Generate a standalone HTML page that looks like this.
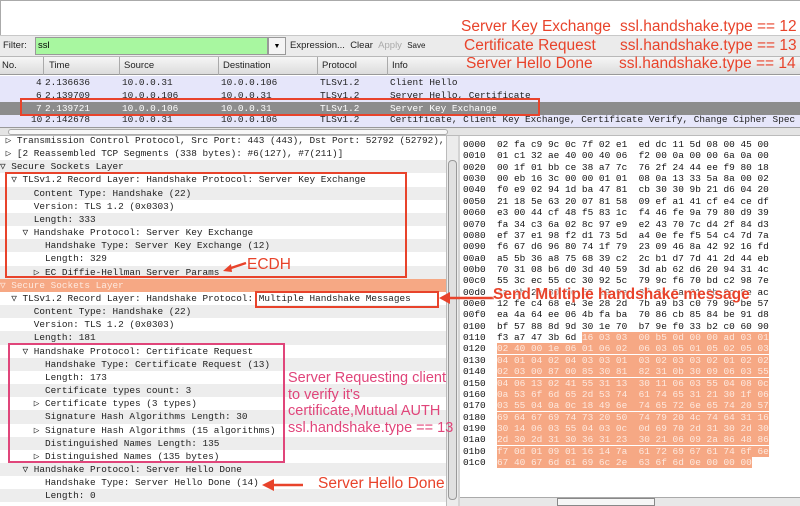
<!DOCTYPE html>
<html><head><meta charset="utf-8"><style>
*{margin:0;padding:0;box-sizing:border-box}
body{width:800px;height:506px;overflow:hidden;background:#fff;position:relative;font-family:"Liberation Sans",sans-serif}
.a{position:absolute}
.mono{font-family:"Liberation Mono","DejaVu Sans Mono",monospace;font-size:9.4px}
.red{color:#e8432b;font-size:15.5px;white-space:pre;line-height:17px}
.pk{color:#e0457a;font-size:14.5px;white-space:pre;line-height:16.6px}
.row{position:absolute;left:0;width:446px;height:13.16px;line-height:13.16px;white-space:pre}
.g{background:#ededed}
.hx{font-family:"Liberation Mono","DejaVu Sans Mono",monospace;font-size:9.45px;line-height:11.36px;white-space:pre;color:#111}
.h{background:#f6a884;color:#fde9df}
.pr{position:absolute;left:0;width:800px;height:13px;line-height:13px;overflow:hidden;white-space:pre}
.pr span{position:absolute;top:0}
</style></head><body>
<div class="a" style="left:0;top:0;width:800px;height:35px;background:#fff;border-top:1px solid #aaa;border-left:1px solid #aaa"></div>
<div class="a" style="left:0;top:35px;width:800px;height:22px;background:#ebebeb;border-top:1px solid #c8c8c8;border-bottom:1px solid #b8b8b8"></div>
<div class="a" style="left:3px;top:40px;font-size:9.5px;color:#222">Filter:</div>
<div class="a" style="left:35px;top:37px;width:233px;height:18px;background:#a8f7a0;border:1px solid #999"></div>
<div class="a" style="left:38px;top:40px;font-size:9.5px">ssl</div>
<div class="a" style="left:268px;top:37px;width:18px;height:18px;background:#f4f4f4;border:1px solid #999;font-size:7px;text-align:center;line-height:17px">▼</div>
<div class="a" style="left:290px;top:40px;font-size:9.5px;color:#222">Expression...&nbsp;&nbsp;Clear&nbsp;&nbsp;<span style="color:#aaa">Apply</span>&nbsp;&nbsp;<span style="font-size:8px">Save</span></div>
<div class="a" style="left:0;top:57px;width:800px;height:18px;background:linear-gradient(#f6f6f6,#dcdcdc);border-bottom:1px solid #999"></div>
<div class="a" style="left:0;top:57px;height:18px;line-height:18px;font-size:9.5px;color:#222;width:800px">
<span class="a" style="left:2px">No.</span><span class="a" style="left:43px;border-left:1px solid #aaa;padding-left:5px;height:18px">Time</span>
<span class="a" style="left:119px;border-left:1px solid #aaa;padding-left:4px;height:18px">Source</span>
<span class="a" style="left:218px;border-left:1px solid #aaa;padding-left:4px;height:18px">Destination</span>
<span class="a" style="left:317px;border-left:1px solid #aaa;padding-left:4px;height:18px">Protocol</span>
<span class="a" style="left:387px;border-left:1px solid #aaa;padding-left:4px;height:18px">Info</span></div>
<div class="pr mono" style="top:76px;background:#e6e6fa;color:#222"><span style="left:36px">4</span><span style="left:45px">2.136636</span><span style="left:122px">10.0.0.31</span><span style="left:221px">10.0.0.106</span><span style="left:320px">TLSv1.2</span><span style="left:390px">Client Hello</span></div>
<div class="pr mono" style="top:89px;background:#e6e6fa;color:#222"><span style="left:36px">6</span><span style="left:45px">2.139709</span><span style="left:122px">10.0.0.106</span><span style="left:221px">10.0.0.31</span><span style="left:320px">TLSv1.2</span><span style="left:390px">Server Hello, Certificate</span></div>
<div class="pr mono" style="top:102px;background:#8c8c8c;color:#fff"><span style="left:36px">7</span><span style="left:45px">2.139721</span><span style="left:122px">10.0.0.106</span><span style="left:221px">10.0.0.31</span><span style="left:320px">TLSv1.2</span><span style="left:390px">Server Key Exchange</span></div>
<div class="pr mono" style="top:115px;background:#e6e6fa;color:#222;line-height:10px;height:12px"><span style="left:31px">10</span><span style="left:45px">2.142678</span><span style="left:122px">10.0.0.31</span><span style="left:221px">10.0.0.106</span><span style="left:320px">TLSv1.2</span><span style="left:390px">Certificate, Client Key Exchange, Certificate Verify, Change Cipher Spec</span></div>
<div class="a" style="left:20px;top:98px;width:520px;height:18px;border:2px solid #e8432b"></div>
<div class="a" style="left:0;top:127px;width:800px;height:9px;background:#e4e4e4;border-top:1px solid #999;border-bottom:1px solid #bbb"></div>
<div class="a" style="left:8px;top:129px;width:440px;height:6px;background:#f8f8f8;border:1px solid #aaa;border-radius:3px"></div>
<!-- tree -->
<div class="a mono" style="left:0;top:136px;width:446px;height:370px;overflow:hidden;color:#222"><div style="position:absolute;left:0;top:-2px;width:446px;height:380px"><div class="row" style="top:0"> ▷ Transmission Control Protocol, Src Port: 443 (443), Dst Port: 52792 (52792),</div><div class="row" style="top:13.16px"> ▷ [2 Reassembled TCP Segments (338 bytes): #6(127), #7(211)]</div><div class="row g" style="top:26.32px">▽ Secure Sockets Layer</div><div class="row" style="top:39.48px">  ▽ TLSv1.2 Record Layer: Handshake Protocol: Server Key Exchange</div><div class="row g" style="top:52.64px">      Content Type: Handshake (22)</div><div class="row" style="top:65.8px">      Version: TLS 1.2 (0x0303)</div><div class="row g" style="top:78.96px">      Length: 333</div><div class="row" style="top:92.12px">    ▽ Handshake Protocol: Server Key Exchange</div><div class="row g" style="top:105.28px">        Handshake Type: Server Key Exchange (12)</div><div class="row" style="top:118.44px">        Length: 329</div><div class="row g" style="top:131.6px">      ▷ EC Diffie-Hellman Server Params</div><div class="row" style="top:144.76px;background:#f6a884;color:#fde9df">▽ Secure Sockets Layer</div><div class="row" style="top:157.92px">  ▽ TLSv1.2 Record Layer: Handshake Protocol: Multiple Handshake Messages</div><div class="row g" style="top:171.08px">      Content Type: Handshake (22)</div><div class="row" style="top:184.24px">      Version: TLS 1.2 (0x0303)</div><div class="row g" style="top:197.4px">      Length: 181</div><div class="row" style="top:210.56px">    ▽ Handshake Protocol: Certificate Request</div><div class="row g" style="top:223.72px">        Handshake Type: Certificate Request (13)</div><div class="row" style="top:236.88px">        Length: 173</div><div class="row g" style="top:250.04px">        Certificate types count: 3</div><div class="row" style="top:263.2px">      ▷ Certificate types (3 types)</div><div class="row g" style="top:276.36px">        Signature Hash Algorithms Length: 30</div><div class="row" style="top:289.52px">      ▷ Signature Hash Algorithms (15 algorithms)</div><div class="row g" style="top:302.68px">        Distinguished Names Length: 135</div><div class="row" style="top:315.84px">      ▷ Distinguished Names (135 bytes)</div><div class="row g" style="top:329px">    ▽ Handshake Protocol: Server Hello Done</div><div class="row" style="top:342.16px">        Handshake Type: Server Hello Done (14)</div><div class="row g" style="top:355.32px">        Length: 0</div></div></div>
<!-- tree scrollbar -->
<div class="a" style="left:446px;top:136px;width:12px;height:370px;background:#ececec;border-left:1px solid #bbb"></div>
<div class="a" style="left:448px;top:160px;width:9px;height:340px;background:#e0e0e0;border:1px solid #999;border-radius:4px"></div>
<div class="a" style="left:458px;top:136px;width:2px;height:370px;background:#d4d4d4"></div>
<!-- hex -->
<div class="a hx" style="left:463px;top:139px">0000  02 fa c9 9c 0c 7f 02 e1  ed dc 11 5d 08 00 45 00
0010  01 c1 32 ae 40 00 40 06  f2 00 0a 00 00 6a 0a 00
0020  00 1f 01 bb ce 38 a7 7c  76 2f 24 44 ee f9 80 18
0030  00 eb 16 3c 00 00 01 01  08 0a 13 33 5a 8a 00 02
0040  f0 e9 02 94 1d ba 47 81  cb 30 30 9b 21 d6 04 20
0050  21 18 5e 63 20 07 81 58  09 ef a1 41 cf e4 ce df
0060  e3 00 44 cf 48 f5 83 1c  f4 46 fe 9a 79 80 d9 39
0070  fa 34 c3 6a 02 8c 97 e9  e2 43 70 7c d4 2f 84 d3
0080  ef 37 e1 98 f2 d1 73 5d  a4 0e fe f5 54 c4 7d 7a
0090  f6 67 d6 96 80 74 1f 79  23 09 46 8a 42 92 16 fd
00a0  a5 5b 36 a8 75 68 39 c2  2c b1 d7 7d 41 2d 44 eb
00b0  70 31 08 b6 d0 3d 40 59  3d ab 62 d6 20 94 31 4c
00c0  55 3c ec 55 cc 30 92 5c  79 9c f6 70 bd c2 98 7e
00d0  4a 1b 2e 30 7c 55 19 0e  3f 2c 5a 61 9b 0c 8e ac
00e0  12 fe c4 68 e4 3e 28 2d  7b a9 b3 c0 79 96 be 57
00f0  ea 4a 64 ee 06 4b fa ba  70 86 cb 85 84 be 91 d8
0100  bf 57 88 8d 9d 30 1e 70  b7 9e f0 33 b2 c0 60 90
0110  f3 a7 47 3b 6d <span class="h">16 03 03  00 b5 0d 00 00 ad 03 01</span>
0120  <span class="h">02 40 00 1e 06 01 06 02  06 03 05 01 05 02 05 03</span>
0130  <span class="h">04 01 04 02 04 03 03 01  03 02 03 03 02 01 02 02</span>
0140  <span class="h">02 03 00 87 00 85 30 81  82 31 0b 30 09 06 03 55</span>
0150  <span class="h">04 06 13 02 41 55 31 13  30 11 06 03 55 04 08 0c</span>
0160  <span class="h">0a 53 6f 6d 65 2d 53 74  61 74 65 31 21 30 1f 06</span>
0170  <span class="h">03 55 04 0a 0c 18 49 6e  74 65 72 6e 65 74 20 57</span>
0180  <span class="h">69 64 67 69 74 73 20 50  74 79 20 4c 74 64 31 16</span>
0190  <span class="h">30 14 06 03 55 04 03 0c  0d 69 70 2d 31 30 2d 30</span>
01a0  <span class="h">2d 30 2d 31 30 36 31 23  30 21 06 09 2a 86 48 86</span>
01b0  <span class="h">f7 0d 01 09 01 16 14 7a  61 72 69 67 61 74 6f 6e</span>
01c0  <span class="h">67 40 67 6d 61 69 6c 2e  63 6f 6d 0e 00 00 00</span></div>
<div class="a" style="left:460px;top:497px;width:340px;height:9px;background:#e8e8e8;border-top:1px solid #aaa"></div>
<div class="a" style="left:557px;top:498px;width:98px;height:8px;background:#f6f6f6;border:1px solid #888"></div>
<!-- annotations -->
<div class="a red" style="left:461px;top:18px">Server Key Exchange</div>
<div class="a red" style="left:620px;top:18px">ssl.handshake.type == 12</div>
<div class="a red" style="left:464px;top:37px">Certificate Request</div>
<div class="a red" style="left:620px;top:37px">ssl.handshake.type == 13</div>
<div class="a red" style="left:466px;top:55px">Server Hello Done</div>
<div class="a red" style="left:619px;top:55px">ssl.handshake.type == 14</div>
<div class="a" style="left:5px;top:172px;width:402px;height:106px;border:2px solid #e8432b"></div>
<div class="a red" style="left:247px;top:256px">ECDH</div>
<svg class="a" style="left:220px;top:258px" width="30" height="16"><path d="M26 5 L8 11" stroke="#e8432b" stroke-width="2.5"/><path d="M3 13 L11 6 L12 14 Z" fill="#e8432b"/></svg>
<div class="a" style="left:255px;top:291px;width:184px;height:17px;border:2px solid #e8432b"></div>
<svg class="a" style="left:436px;top:290px" width="60" height="16"><path d="M58 8 L12 8" stroke="#e8432b" stroke-width="2.5"/><path d="M3 8 L14 2 L14 14 Z" fill="#e8432b"/></svg>
<div class="a red" style="left:493px;top:286px;font-weight:bold;text-shadow:0 0 2px #fff,0 0 2px #fff,0 0 3px #fff">Send Multiple handshake message</div>
<div class="a" style="left:8px;top:343px;width:277px;height:120px;border:2px solid #e0457a"></div>
<div class="a pk" style="left:288px;top:370px">Server Requesting client
to verify it's
certificate,Mutual AUTH
ssl.handshake.type == 13</div>
<svg class="a" style="left:260px;top:477px" width="45" height="16"><path d="M43 8 L12 8" stroke="#e8432b" stroke-width="2.5"/><path d="M2 8 L14 2 L14 14 Z" fill="#e8432b"/></svg>
<div class="a red" style="left:318px;top:475px">Server Hello Done</div>
</body></html>
